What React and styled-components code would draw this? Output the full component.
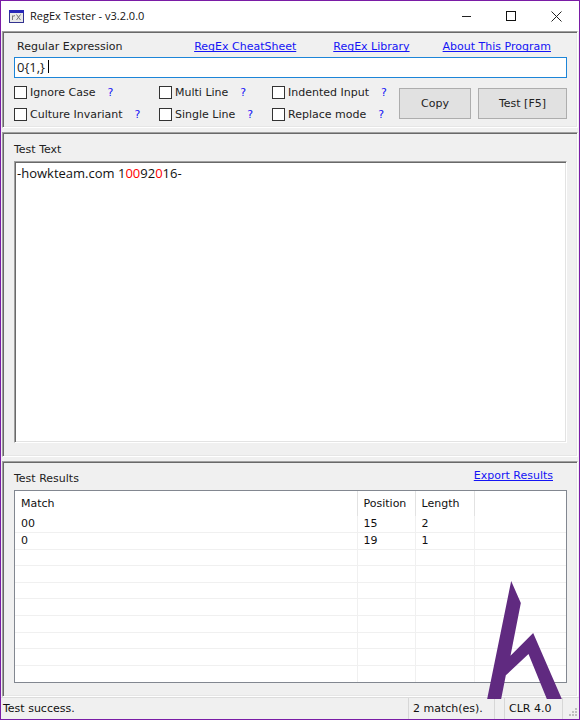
import React, { useState } from "react";
import styled, { createGlobalStyle } from "styled-components";

const GlobalStyle = createGlobalStyle`
  * {
    box-sizing: border-box;
  }

  body {
    margin: 0;
    font-family: "DejaVu Sans", Verdana, sans-serif;
    font-size: 11px;
    line-height: 14px;
    color: #111;
  }
`;

const Window = styled.div`
  position: relative;
  display: flex;
  flex-direction: column;
  min-height: 100vh;
  border: 1px solid #7a1ca6;
  background-color: #f0f0f0;
`;

const TitleBar = styled.header`
  display: flex;
  align-items: center;
  height: 30px;
  padding-left: 8px;
  background-color: #fff;
`;

const Title = styled.h1`
  flex: 1;
  margin: 0 0 0 6px;
  font-family: "Open Sans", "Segoe UI", sans-serif;
  font-size: 11px;
  font-weight: 400;
  line-height: 16px;
`;

const WindowButton = styled.button`
  display: flex;
  align-items: center;
  justify-content: center;
  width: 45px;
  height: 28px;
  padding: 0;
  border: none;
  background-color: transparent;
`;

const Panel = styled.section`
  display: flex;
  flex-direction: column;
  flex: ${(props) => (props.$grow ? `${props.$grow} 1 0` : "none")};
  margin: 0 1px ${(props) => (props.$last ? "0" : "4px")};
  padding: ${(props) => props.$padding};
  border: 1px solid;
  border-color: #a0a0a0 #fff #fff #a0a0a0;
  box-shadow: inset 1px 1px #696969, inset -1px -1px #e6e6e6;
`;

const PanelHead = styled.div`
  display: flex;
  align-items: ${(props) => props.$align || "center"};
  justify-content: space-between;
  padding: ${(props) => props.$padding || "0"};
`;

const Label = styled.label`
  padding-top: ${(props) => props.$top || "0"};
  color: #222;
`;

const Links = styled.nav`
  display: flex;
`;

const Link = styled.a`
  margin-right: ${(props) => props.$space || "0"};
  color: #1414f5;
  text-decoration: underline;
  text-decoration-skip-ink: none;
`;

const FieldWrap = styled.div`
  position: relative;
`;

const PatternInput = styled.input`
  display: block;
  width: 100%;
  height: 21px;
  padding: 0 2px 2px;
  border: 1px solid #1d85d8;
  border-radius: 0;
  outline: none;
  background-color: #fff;
  color: #222;
  font-family: "Open Sans", "Segoe UI", sans-serif;
  font-size: 13px;
`;

const Caret = styled.span`
  position: absolute;
  top: 3px;
  left: 34px;
  width: 1px;
  height: 13px;
  background-color: #000;
`;

const Toolbar = styled.div`
  display: flex;
  align-items: center;
  justify-content: space-between;
  margin-top: 3px;
`;

const Options = styled.div`
  display: grid;
  grid-template-columns: 145px 113px auto;
  grid-auto-rows: 22px;
`;

const Option = styled.div`
  display: flex;
  align-items: center;
`;

const Checkbox = styled.input`
  appearance: none;
  width: 13px;
  height: 13px;
  margin: 0 3px 0 0;
  border: 1px solid #333;
  background-color: #fff;

  &:checked {
    box-shadow: inset 0 0 0 2px #fff;
    background-color: #333;
  }
`;

const Help = styled.a`
  margin-left: 12px;
  padding-top: 2px;
  color: #1414f5;
  text-decoration: none;
`;

const Buttons = styled.div`
  display: flex;
  gap: 7px;
  padding-top: 1px;
`;

const Button = styled.button`
  width: ${(props) => props.$width};
  height: 31px;
  padding: 0;
  border: 1px solid #adadad;
  background-color: #e1e1e1;
  color: #222;
  font: inherit;
`;

const TestText = styled.div`
  flex: 1;
  padding: 3px 2px;
  border: 1px solid;
  border-color: #a0a0a0 #fff #fff #a0a0a0;
  box-shadow: inset 1px 1px #696969, inset -1px -1px #e3e3e3;
  background-color: #fff;
  color: #111;
  font-family: "Open Sans", "Segoe UI", sans-serif;
  font-size: 13px;
  line-height: 16px;
  outline: none;
`;

const Hit = styled.span`
  color: #f00;
`;

const ResultsBox = styled.div`
  display: flex;
  flex: 1;
  border: 1px solid #828790;
`;

const Table = styled.table`
  width: 100%;
  table-layout: fixed;
  border-collapse: collapse;
  background-color: #fff;
`;

const HeadCell = styled.th`
  width: ${(props) => props.$width || "auto"};
  height: 25px;
  padding: 0 6px;
  border-right: 1px solid #e2e2e2;
  font-weight: 400;
  text-align: left;
  line-height: 14px;

  &:last-child {
    border-right: none;
  }
`;

const Cell = styled.td`
  height: 16px;
  padding: 0 6px;
  border-right: 1px solid #f0f0f0;
  border-bottom: 1px solid #f0f0f0;
  line-height: 14px;

  &:last-child {
    border-right: none;
  }

  tr:last-child > & {
    border-bottom: none;
  }
`;

const StatusBar = styled.footer`
  display: flex;
  align-items: stretch;
  height: 22px;
  border-top: 1px solid #dcdcdc;
  line-height: 22px;
`;

const StatusText = styled.div`
  flex: ${(props) => (props.$width ? "none" : 1)};
  width: ${(props) => props.$width || "auto"};
  padding-left: ${(props) => (props.$width ? "4px" : "2px")};
  border-left: ${(props) => (props.$width ? "1px solid #d7d7d7" : "none")};
  white-space: nowrap;
`;

const Grip = styled.svg`
  align-self: flex-end;
  margin: 0 2px 2px 1px;
`;

const Watermark = styled.svg`
  position: absolute;
  right: 17px;
  bottom: 20px;
  pointer-events: none;
`;

const options = [
  "Ignore Case",
  "Multi Line",
  "Indented Input",
  "Culture Invariant",
  "Single Line",
  "Replace mode",
];

const matches = [
  { match: "00", position: 15, length: 2 },
  { match: "0", position: 19, length: 1 },
];

const ROW_COUNT = 10;

const AppIcon = () => (
  <svg width="15" height="13" viewBox="0 0 15 13" aria-hidden="true">
    <rect x="0.5" y="0.5" width="14" height="12" fill="#e8e8e8" stroke="#33338f" />
    <rect x="0" y="0" width="15" height="3" fill="#2626b8" />
    <path
      d="M3.5 10V5.5M3.5 7Q4 5.5 6 5.7M7.5 4.5L11.5 10M11.5 4.5L7.5 10"
      fill="none"
      stroke="#777"
    />
  </svg>
);

const App = () => {
  const [pattern, setPattern] = useState("0{1,}");
  const emptyRows = Array.from({ length: ROW_COUNT - matches.length });

  return (
    <Window>
      <GlobalStyle />
      <TitleBar>
        <AppIcon />
        <Title>RegEx Tester - v3.2.0.0</Title>
        <WindowButton aria-label="Minimize">
          <svg width="11" height="11" stroke="#222" fill="none">
            <path d="M1 5.5H10" />
          </svg>
        </WindowButton>
        <WindowButton aria-label="Maximize">
          <svg width="11" height="11" stroke="#111" fill="none">
            <rect x="0.5" y="0.5" width="9" height="9" />
          </svg>
        </WindowButton>
        <WindowButton aria-label="Close">
          <svg width="11" height="11" stroke="#222" fill="none">
            <path d="M0.5 0.5L10.5 10.5M10.5 0.5L0.5 10.5" />
          </svg>
        </WindowButton>
      </TitleBar>

      <Panel $padding="8px 10px 2px 11px">
        <PanelHead $padding="0 16px 3px 3px">
          <Label htmlFor="pattern">Regular Expression</Label>
          <Links>
            <Link href="#cheatsheet" $space="37px">
              RegEx CheatSheet
            </Link>
            <Link href="#library" $space="33px">
              RegEx Library
            </Link>
            <Link href="#about">About This Program</Link>
          </Links>
        </PanelHead>
        <FieldWrap>
          <PatternInput
            id="pattern"
            type="text"
            value={pattern}
            onChange={(e) => setPattern(e.target.value)}
          />
          <Caret />
        </FieldWrap>
        <Toolbar>
          <Options>
            {options.map((name) => {
              const id = name.toLowerCase().replace(" ", "-");
              return (
                <Option key={name}>
                  <Checkbox type="checkbox" id={id} />
                  <Label htmlFor={id} $top="2px">
                    {name}
                  </Label>
                  <Help href={`#${id}-help`}>?</Help>
                </Option>
              );
            })}
          </Options>
          <Buttons>
            <Button $width="72px">Copy</Button>
            <Button $width="89px">Test [F5]</Button>
          </Buttons>
        </Toolbar>
      </Panel>

      <Panel $grow={301} $padding="9px 10px 13px 11px">
        <PanelHead $padding="0 0 4px">
          <Label as="span" id="test-text-label" $top="1px">
            Test Text
          </Label>
        </PanelHead>
        <TestText
          role="textbox"
          aria-multiline="true"
          aria-labelledby="test-text-label"
          contentEditable
          suppressContentEditableWarning
          spellCheck={false}
        >
          -howkteam.com 1<Hit>00</Hit>92<Hit>0</Hit>16-
        </TestText>
      </Panel>

      <Panel $last $grow={214} $padding="7px 10px 13px 11px">
        <PanelHead $align="flex-start" $padding="0 14px 4px 0">
          <Label as="span" $top="3px">
            Test Results
          </Label>
          <Link href="#export">Export Results</Link>
        </PanelHead>
        <ResultsBox>
          <Table>
            <thead>
              <tr>
                <HeadCell>Match</HeadCell>
                <HeadCell $width="58px">Position</HeadCell>
                <HeadCell $width="59px">Length</HeadCell>
                <HeadCell $width="92px" />
              </tr>
            </thead>
            <tbody>
              {matches.map((row) => (
                <tr key={row.position}>
                  <Cell>{row.match}</Cell>
                  <Cell>{row.position}</Cell>
                  <Cell>{row.length}</Cell>
                  <Cell />
                </tr>
              ))}
              {emptyRows.map((_, index) => (
                <tr key={index}>
                  <Cell />
                  <Cell />
                  <Cell />
                  <Cell />
                </tr>
              ))}
            </tbody>
          </Table>
        </ResultsBox>
      </Panel>

      <StatusBar>
        <StatusText>Test success.</StatusText>
        <StatusText $width="86px">2 match(es).</StatusText>
        <StatusText $width="10px" />
        <StatusText $width="58px">CLR 4.0</StatusText>
        <StatusText $width="1px" />
        <Grip width="9" height="9" viewBox="0 0 9 9" fill="#bfbfbf">
          <path d="M7 0h2v2H7zM7 3h2v2H7zM4 3h2v2H4zM7 6h2v2H7zM4 6h2v2H4zM1 6h2v2H1z" />
        </Grip>
      </StatusBar>

      <Watermark width="75" height="118" viewBox="0 0 224 354" aria-hidden="true">
        <path
          d="M72 0L101 66L70 224L138 156L224 354H179L124 219L56 283L42 354H0Z"
          fill="#602a80"
        />
      </Watermark>
    </Window>
  );
};

export default App;
